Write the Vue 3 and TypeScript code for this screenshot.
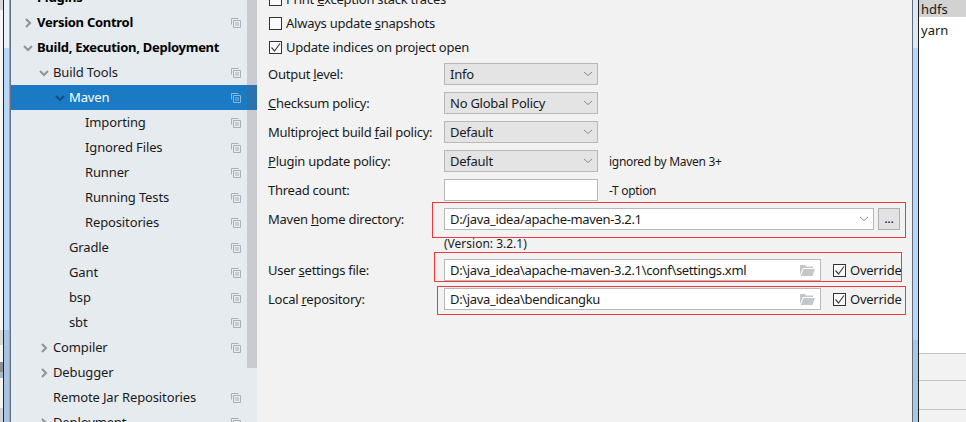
<script setup lang="ts">
interface TreeRow { label: string; indent: number; arrow?: 'right' | 'down'; bold?: boolean; selected?: boolean; copy?: boolean }
const rows: TreeRow[] = [
  { label: 'Plugins', indent: 26, bold: true },
  { label: 'Version Control', indent: 26, arrow: 'right', bold: true, copy: true },
  { label: 'Build, Execution, Deployment', indent: 26, arrow: 'down', bold: true },
  { label: 'Build Tools', indent: 42, arrow: 'down', copy: true },
  { label: 'Maven', indent: 58, arrow: 'down', selected: true, copy: true },
  { label: 'Importing', indent: 74, copy: true },
  { label: 'Ignored Files', indent: 74, copy: true },
  { label: 'Runner', indent: 74, copy: true },
  { label: 'Running Tests', indent: 74, copy: true },
  { label: 'Repositories', indent: 74, copy: true },
  { label: 'Gradle', indent: 58, copy: true },
  { label: 'Gant', indent: 58, copy: true },
  { label: 'bsp', indent: 58, copy: true },
  { label: 'sbt', indent: 58, copy: true },
  { label: 'Compiler', indent: 42, arrow: 'right', copy: true },
  { label: 'Debugger', indent: 42, arrow: 'right' },
  { label: 'Remote Jar Repositories', indent: 42, copy: true },
  { label: 'Deployment', indent: 42, arrow: 'right', copy: true },
]
</script>

<template>
  <div class="window">
    <div class="edge">
      <div class="edge-out"></div>
      <div class="edge-dark"></div>
      <div class="edge-blue"></div>
      <div class="edge-line"></div>
    </div>
    <aside class="sidebar">
      <div class="tree">
        <div v-for="r in rows" :key="r.label" class="row" :class="{ bold: r.bold, selected: r.selected }" :style="{ paddingLeft: r.indent + 'px' }">
          <svg v-if="r.arrow" class="arrow" :style="{ left: r.indent - 14 + 'px' }" width="10" height="10" viewBox="0 0 10 10">
            <path v-if="r.arrow === 'right'" d="M3 1 L7 5 L3 9" />
            <path v-else d="M1 3 L5 7 L9 3" />
          </svg>
          <span>{{ r.label }}</span>
          <svg v-if="r.copy" class="copy" width="10" height="10" viewBox="0 0 10 10">
            <path d="M0.5 6.5 V0.5 H7.5 M2.5 9.5 V2.5 H9.5 V9.5 Z M4 5 H8 M4 7 H8" />
          </svg>
        </div>
      </div>
      <div class="scroll"></div>
    </aside>
    <main class="main">
      <div class="form">
        <label class="check first"><i class="box"></i><span>Print <u>e</u>xception stack traces</span></label>
        <label class="check"><i class="box"></i><span>Always update <u>s</u>napshots</span></label>
        <label class="check"><i class="box on"><svg width="11" height="11" viewBox="0 0 11 11"><path d="M1.5 5.5 L4.5 9 L10 1.5" /></svg></i><span>Update indices on project open</span></label>

        <div class="field f1"><span class="lab">Output <u>l</u>evel:</span><div class="select">Info<svg class="chev" width="10" height="6" viewBox="0 0 10 6"><path d="M1 1 L5 4.5 L9 1" /></svg></div></div>
        <div class="field"><span class="lab"><u>C</u>hecksum policy:</span><div class="select">No Global Policy<svg class="chev" width="10" height="6" viewBox="0 0 10 6"><path d="M1 1 L5 4.5 L9 1" /></svg></div></div>
        <div class="field"><span class="lab">Multiproject build <u>f</u>ail policy:</span><div class="select">Default<svg class="chev" width="10" height="6" viewBox="0 0 10 6"><path d="M1 1 L5 4.5 L9 1" /></svg></div></div>
        <div class="field"><span class="lab"><u>P</u>lugin update policy:</span><div class="select">Default<svg class="chev" width="10" height="6" viewBox="0 0 10 6"><path d="M1 1 L5 4.5 L9 1" /></svg></div><span class="hint">ignored by Maven 3+</span></div>
        <div class="field"><span class="lab">Thread count:</span><div class="input short"></div><span class="hint">-T option</span></div>
        <div class="field"><span class="lab">Maven <u>h</u>ome directory:</span><div class="input home">D:/java_idea/apache-maven-3.2.1<svg class="chev" width="10" height="6" viewBox="0 0 10 6"><path d="M1 1 L5 4.5 L9 1" /></svg></div><div class="dots">...</div></div>
        <div class="version">(Version: 3.2.1)</div>
        <div class="field user"><span class="lab">User <u>s</u>ettings file:</span><div class="input path">D:\java_idea\apache-maven-3.2.1\conf\settings.xml<svg class="folder" width="15" height="12" viewBox="0 0 15 12"><path d="M0 1 H5 L6 2.5 H13 V4 H3 L0 11 Z M3.5 5 H15 L12.5 12 H0.8 Z" /></svg></div><label class="check over"><i class="box on"><svg width="11" height="11" viewBox="0 0 11 11"><path d="M1.5 5.5 L4.5 9 L10 1.5" /></svg></i><span>Override</span></label></div>
        <div class="field local"><span class="lab">Local <u>r</u>epository:</span><div class="input path">D:\java_idea\bendicangku<svg class="folder" width="15" height="12" viewBox="0 0 15 12"><path d="M0 1 H5 L6 2.5 H13 V4 H3 L0 11 Z M3.5 5 H15 L12.5 12 H0.8 Z" /></svg></div><label class="check over"><i class="box on"><svg width="11" height="11" viewBox="0 0 11 11"><path d="M1.5 5.5 L4.5 9 L10 1.5" /></svg></i><span>Override</span></label></div>
      </div>
      <div class="mark m1"></div>
      <div class="mark m2"></div>
      <div class="mark m3"></div>
    </main>
    <div class="frame"></div>
    <section class="behind">
      <div class="item sel">hdfs</div>
      <div class="item">yarn</div>
      <div class="spacer"></div>
      <div class="strip s1"></div>
      <div class="strip s2"></div>
      <div class="strip s3"></div>
    </section>
  </div>
</template>

<style>
html, body { margin: 0; padding: 0; background: #f2f2f2; overflow: hidden; }
</style>

<style scoped>
.window { display: flex; width: 966px; height: 422px; overflow: hidden; font: 13px "Noto Sans", "Open Sans", sans-serif; letter-spacing: -0.25px; color: #1a1a1a; background: #f2f2f2; }
.edge { display: flex; width: 11px; flex: none; }
.edge-out { width: 3px; background: linear-gradient(180deg, #d8d8d8 0 10px, #f6f6f6 10px 330px, #d8d8d8 330px 345px, #f4f4f4 345px 362px, #8a8f92 362px 372px, #a9b8c8 372px 378px, #f4f4f4 378px 408px, #cfd2d6 408px); }
.edge-dark { width: 1px; background: #222; }
.edge-blue { width: 5px; background: linear-gradient(180deg, #e7f2fd 0 48px, #b9d7f8 48px 330px, #a9c4e2 330px); }
.edge-line { width: 2px; background: linear-gradient(90deg, #8fa3b8 0 1px, #66737f 1px); }
.sidebar { position: relative; width: 246px; flex: none; background: #e6ebf0; overflow: hidden; }
.tree { margin-top: -15px; letter-spacing: -0.13px; }
.row { position: relative; height: 25px; line-height: 25px; box-sizing: border-box; white-space: nowrap; }
.row.bold { font-weight: 700; color: #000; letter-spacing: -0.28px; }
.row.selected { background: #1a7bc4; color: #fff; z-index: 2; }
.arrow { position: absolute; top: 8px; fill: none; stroke: #8f9397; stroke-width: 2; }
.selected .arrow { stroke: #0f4f85; }
.copy { position: absolute; left: 220px; top: 8px; fill: none; stroke: #a9b1b6; stroke-width: 1; }
.selected .copy { stroke: #8fb8d8; z-index: 1; }
.scroll { position: absolute; top: 0; right: 0; width: 10px; height: 368px; background: #c9cbce; z-index: 1; }
.selected::after { content: ""; position: absolute; top: 0; right: 0; width: 10px; height: 25px; background: #2c72ae; }
.main { position: relative; width: 655px; flex: none; background: #f2f2f2; box-sizing: border-box; padding-left: 11px; }
.form { margin-top: -13px; display: flex; flex-direction: column; }
.check { display: flex; align-items: center; gap: 4px; height: 24px; padding-left: 1px; }
.box { display: flex; align-items: center; justify-content: center; box-sizing: border-box; width: 13px; height: 13px; border: 1px solid #333; background: #fbfbfb; flex: none; }
.box svg { fill: none; stroke: #444; stroke-width: 1.2; }
.field { display: flex; align-items: center; height: 22px; margin-top: 7px; }
.field.f1 { margin-top: 4px; }
.lab { width: 176px; flex: none; white-space: nowrap; line-height: 20px; }
.select, .input { position: relative; box-sizing: border-box; height: 22px; line-height: 20px; padding-left: 5px; white-space: nowrap; border: 1px solid #b8b8b8; flex: none; }
.select { width: 154px; background: #e4e4e4; }
.input { background: #fff; letter-spacing: -0.34px; }
.short { width: 154px; }
.home { width: 430px; }
.path { width: 377px; }
.chev { position: absolute; right: 4px; top: 7px; fill: none; stroke: #8a8a8a; stroke-width: 1; }
.folder { position: absolute; right: 5px; top: 4px; fill: #c3c7ca; }
.hint { margin-left: 11px; font-size: 12px; letter-spacing: -0.3px; white-space: nowrap; }
.dots { box-sizing: border-box; width: 22px; height: 22px; margin-left: 4px; border: 1px solid #b0b0b0; background: #e2e2e2; text-align: center; line-height: 18px; }
.version { margin-left: 176px; height: 22px; line-height: 28px; font-size: 12px; letter-spacing: 0; }
.field.user { margin-top: 7px; }
.check.over { margin-left: 12px; height: 22px; padding-left: 0; }
.mark { position: absolute; border: 1px solid #f23a3a; box-sizing: border-box; pointer-events: none; }
.m1 { left: 175px; top: 202px; width: 474px; height: 36px; }
.m2 { left: 177px; top: 252px; width: 468px; height: 30px; }
.m3 { left: 180px; top: 286px; width: 469px; height: 29px; }
.frame { width: 7px; flex: none; background: linear-gradient(90deg, #5f6b78 0 1px, transparent 1px 6px, #1c1c1c 6px 7px), linear-gradient(180deg, #dce9f6 0 48px, #b7d5f6 48px 340px, #a9c6e6 340px); }
.behind { flex: 1; display: flex; flex-direction: column; background: #fff; min-width: 0; }
.item { height: 26px; line-height: 26px; padding-left: 2px; font-size: 13px; letter-spacing: 0; }
.item.sel { height: 17px; line-height: 18px; background: #d2d2d2; }
.spacer { height: 310px; }
.strip { background: #f2f2f2; border-top: 1px solid #c4c4c4; box-sizing: border-box; }
.s1 { height: 27px; }
.s2 { height: 29px; }
.s3 { flex: 1; }
</style>
